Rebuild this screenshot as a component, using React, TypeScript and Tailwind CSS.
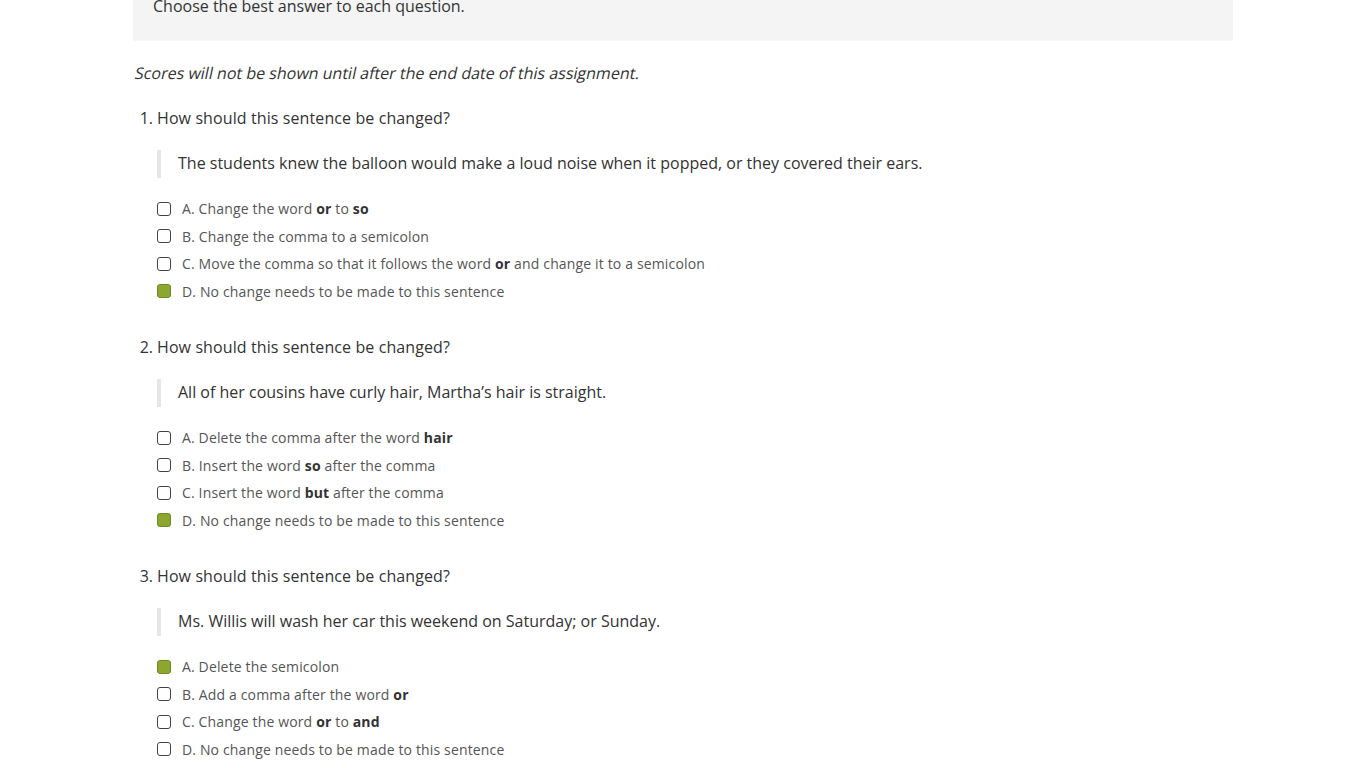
import type { ReactNode } from 'react';

type Option = { label: ReactNode; checked?: boolean };
type Question = { n: number; text: string; quote: string; options: Option[] };

const B = ({ children }: { children: ReactNode }) => <strong className="font-bold text-[#333]">{children}</strong>;

const questions: Question[] = [
  {
    n: 1,
    text: 'How should this sentence be changed?',
    quote: 'The students knew the balloon would make a loud noise when it popped, or they covered their ears.',
    options: [
      { label: <>A. Change the word <B>or</B> to <B>so</B></> },
      { label: <>B. Change the comma to a semicolon</> },
      { label: <>C. Move the comma so that it follows the word <B>or</B> and change it to a semicolon</> },
      { label: <>D. No change needs to be made to this sentence</>, checked: true },
    ],
  },
  {
    n: 2,
    text: 'How should this sentence be changed?',
    quote: 'All of her cousins have curly hair, Martha’s hair is straight.',
    options: [
      { label: <>A. Delete the comma after the word <B>hair</B></> },
      { label: <>B. Insert the word <B>so</B> after the comma</> },
      { label: <>C. Insert the word <B>but</B> after the comma</> },
      { label: <>D. No change needs to be made to this sentence</>, checked: true },
    ],
  },
  {
    n: 3,
    text: 'How should this sentence be changed?',
    quote: 'Ms. Willis will wash her car this weekend on Saturday; or Sunday.',
    options: [
      { label: <>A. Delete the semicolon</>, checked: true },
      { label: <>B. Add a comma after the word <B>or</B></> },
      { label: <>C. Change the word <B>or</B> to <B>and</B></> },
      { label: <>D. No change needs to be made to this sentence</> },
    ],
  },
];

function Checkbox({ checked }: { checked?: boolean }) {
  return checked ? (
    <span className="w-[14px] h-[14px] rounded-[3px] bg-[#8ba72f] border border-[#6f8a22] shrink-0" />
  ) : (
    <span className="w-[14px] h-[14px] rounded-[3px] bg-white border border-[#444] shrink-0" />
  );
}

function QuestionBlock({ q }: { q: Question }) {
  return (
    <div className="mb-[31px]">
      <div className="flex text-[16px] leading-[22px] text-[#333]">
        <span className="w-[20px] text-right">{q.n}.</span>
        <span className="ml-[4px] tracking-[0.1px]">{q.text}</span>
      </div>
      <div className="ml-[24px] mt-[21px] border-l-4 border-[#e6e6e6] pl-[17px] pt-[2px] pb-[4px] text-[16px] leading-[22px] text-[#333]">
        {q.quote}
      </div>
      <div className="ml-[24px] mt-[17px] flex flex-col">
        {q.options.map((o, i) => (
          <div key={i} className="flex items-center h-[27.5px] text-[14px] tracking-[0.15px] text-[#555]">
            <Checkbox checked={o.checked} />
            <span className="ml-[11px]">{o.label}</span>
          </div>
        ))}
      </div>
    </div>
  );
}

export default function App() {
  return (
    <div className="min-h-screen bg-white font-['Open_Sans',sans-serif] overflow-hidden">
      <div className="w-[1100px] ml-[133px] -mt-[5px]">
        <div className="bg-[#f4f4f4] rounded-[2px] pl-[20px] pb-[24px] text-[16px] leading-[22px] text-[#333]">
          Choose the best answer to each question.
        </div>
        <p className="mt-[21px] text-[16px] leading-[22px] text-[#333]">
          <span className="inline-block origin-bottom-left -skew-x-12">
            Scores will not be shown until after the end date of this assignment.
          </span>
        </p>
        <div className="mt-[23px]">
          {questions.map((q) => (
            <QuestionBlock key={q.n} q={q} />
          ))}
        </div>
      </div>
    </div>
  );
}
